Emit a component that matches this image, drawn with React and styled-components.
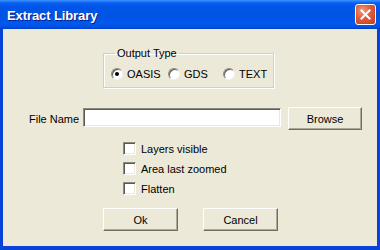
import React from 'react';
import styled, { createGlobalStyle } from 'styled-components';

const GlobalStyle = createGlobalStyle`
  html, body {
    margin: 0;
    padding: 0;
    background: #0a4de0;
  }
`;

const Window = styled.div`
  width: 380px;
  height: 250px;
  display: flex;
  flex-direction: column;
  font-family: "Liberation Sans", Arial, sans-serif;
  font-size: 11px;
  color: #000;
  background: #0842d8;
  box-sizing: border-box;
  overflow: hidden;
`;

const TitleBar = styled.div`
  height: 29px;
  flex: none;
  display: flex;
  align-items: center;
  justify-content: space-between;
  padding: 0 4px 0 7px;
  background: linear-gradient(
    to bottom,
    #3d95ff 0px,
    #0a5ff3 3px,
    #0056e8 6px,
    #0054e3 16px,
    #0058ee 24px,
    #0051e0 27px,
    #003dc8 29px
  );
`;

const Title = styled.span`
  color: #fff;
  font-weight: bold;
  font-size: 13px;
  letter-spacing: -0.1px;
  text-shadow: 1px 1px 0 #0a1e8c;
  margin-top: 1px;
`;

const CloseButton = styled.button`
  width: 21px;
  height: 21px;
  padding: 0;
  border: 1px solid #fff;
  border-radius: 3px;
  background: radial-gradient(circle at 35% 30%, #f09c80 0%, #e25a3a 45%, #c8411c 100%);
  display: flex;
  align-items: center;
  justify-content: center;
  box-shadow: inset 0 0 1px #a32a0a;
`;

const Body = styled.div`
  flex: 1;
  margin: 0 3px 4px 3px;
  background: #ece9d8;
  display: flex;
  flex-direction: column;
`;

const GroupRow = styled.div`
  padding-left: 100px;
  margin-top: 18px;
`;

const GroupBox = styled.fieldset`
  width: 171px;
  box-sizing: border-box;
  margin: 0;
  padding: 7px 0 7px 7px;
  border: 1px solid #d0d0bf;
  box-shadow: 1px 1px 0 #fff, inset 1px 1px 0 #fff;
  border-radius: 0;
`;

const Legend = styled.legend`
  padding: 0 2px;
  margin-left: 4px;
  line-height: 13px;
`;

const RadioGrid = styled.div`
  display: grid;
  grid-template-columns: 57px 55px auto;
  align-items: center;
`;

const Choice = styled.label`
  display: flex;
  align-items: center;
  gap: 4px;
  height: 13px;
`;

const RadioDot = styled.span`
  width: 12px;
  height: 12px;
  box-sizing: border-box;
  border-radius: 50%;
  background: #fff;
  border: 1px solid;
  border-color: #8d8b80 #f4f3ee #f4f3ee #8d8b80;
  box-shadow: inset 1px 1px 0 #5a5a52;
  display: flex;
  align-items: center;
  justify-content: center;
  flex: none;

  &::after {
    content: "";
    width: 4px;
    height: 4px;
    border-radius: 50%;
    background: ${p => (p.$checked ? '#000' : 'transparent')};
  }
`;

const FileRow = styled.div`
  display: flex;
  align-items: center;
  margin-top: 19px;
  padding-left: 26px;
`;

const FieldLabel = styled.span`
  width: 50px;
  white-space: nowrap;
  text-align: right;
  margin-right: 4px;
`;

const TextInput = styled.input`
  width: 198px;
  height: 19px;
  box-sizing: border-box;
  margin: 0 0 2px 0;
  padding: 1px 3px;
  font: inherit;
  background: #fff;
  border: 1px solid;
  border-color: #8d8b80 #fff #fff #8d8b80;
  box-shadow: inset 1px 1px 0 #5a5a52, inset -1px -1px 0 #ece9d8;
  outline: none;
`;

const Button = styled.button`
  width: ${p => p.$w || 75}px;
  height: 23px;
  box-sizing: border-box;
  padding: 0;
  margin: 0 0 0 ${p => p.$gap || 0}px;
  font: inherit;
  font-size: 11px;
  color: #000;
  background: #ece9d8;
  border: 1px solid;
  border-color: #fff #716f64 #716f64 #fff;
  box-shadow: inset -1px -1px 0 #aca899;
`;

const CheckList = styled.div`
  display: flex;
  flex-direction: column;
  gap: 7px;
  margin-top: 12px;
  padding-left: 120px;
`;

const CheckBox = styled.span`
  width: 13px;
  height: 13px;
  box-sizing: border-box;
  flex: none;
  background: #fff;
  border: 1px solid;
  border-color: #8d8b80 #fff #fff #8d8b80;
  box-shadow: inset 1px 1px 0 #5a5a52, inset -1px -1px 0 #ece9d8;
`;

const CheckItem = styled.label`
  display: flex;
  align-items: center;
  gap: 5px;
  height: 13px;
`;

const ButtonRow = styled.div`
  display: flex;
  gap: 25px;
  margin-top: 13px;
  padding-left: 100px;
`;

export default function App() {
  return (
    <>
      <GlobalStyle />
      <Window>
        <TitleBar>
          <Title>Extract Library</Title>
          <CloseButton aria-label="Close">
            <svg width="11" height="11" viewBox="0 0 11 11">
              <path d="M1.5 1.5 L9.5 9.5 M9.5 1.5 L1.5 9.5" stroke="#fff" strokeWidth="2" strokeLinecap="square" />
            </svg>
          </CloseButton>
        </TitleBar>
        <Body>
          <GroupRow>
            <GroupBox>
              <Legend>Output Type</Legend>
              <RadioGrid>
                <Choice><RadioDot $checked />OASIS</Choice>
                <Choice><RadioDot />GDS</Choice>
                <Choice><RadioDot />TEXT</Choice>
              </RadioGrid>
            </GroupBox>
          </GroupRow>
          <FileRow>
            <FieldLabel>File Name</FieldLabel>
            <TextInput />
            <Button $w={74} $gap={7}>Browse</Button>
          </FileRow>
          <CheckList>
            <CheckItem><CheckBox />Layers visible</CheckItem>
            <CheckItem><CheckBox />Area last zoomed</CheckItem>
            <CheckItem><CheckBox />Flatten</CheckItem>
          </CheckList>
          <ButtonRow>
            <Button>Ok</Button>
            <Button>Cancel</Button>
          </ButtonRow>
        </Body>
      </Window>
    </>
  );
}
